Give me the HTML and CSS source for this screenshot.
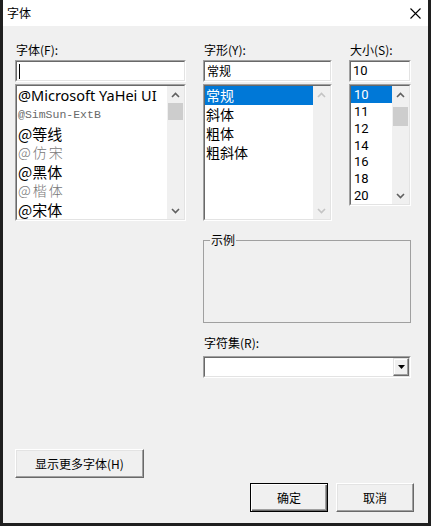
FILE: index.html
```html
<!DOCTYPE html>
<html lang="zh-CN">
<head>
<meta charset="utf-8">
<title>字体</title>
<link rel="stylesheet" href="styles.css">
</head>
<body>
<div class="window">
  <div class="titlebar">
    <span class="title">字体</span>
    <svg class="close" width="11" height="11" viewBox="0 0 11 11"><path d="M0.5 0.5L10.5 10.5M10.5 0.5L0.5 10.5" stroke="#000" stroke-width="1.1" fill="none"/></svg>
  </div>
  <div class="client">
    <div class="grid">
      <div class="col">
        <div class="label">字体(F):</div>
        <div class="edit"><div class="edit-in"><span class="caret"></span></div></div>
        <div class="list list-tall">
          <div class="list-in">
            <div class="items">
              <div class="item f-yahei">@Microsoft YaHei UI</div>
              <div class="item f-extb">@SimSun-ExtB</div>
              <div class="item f-dx">@等线</div>
              <div class="item f-light">@仿宋</div>
              <div class="item f-hei">@黑体</div>
              <div class="item f-light">@楷体</div>
              <div class="item f-song">@宋体</div>
            </div>
            <div class="scrollbar">
              <div class="arrow"><svg width="9" height="6" viewBox="0 0 9 6"><path d="M1 5L4.5 1.5L8 5" stroke="#606060" stroke-width="1.6" fill="none"/></svg></div>
              <div class="thumb thumb-font"></div>
              <div class="track"></div>
              <div class="arrow"><svg width="9" height="6" viewBox="0 0 9 6"><path d="M1 1L4.5 4.5L8 1" stroke="#606060" stroke-width="1.6" fill="none"/></svg></div>
            </div>
          </div>
        </div>
      </div>
      <div class="col">
        <div class="label">字形(Y):</div>
        <div class="edit"><div class="edit-in">常规</div></div>
        <div class="list list-tall">
          <div class="list-in">
            <div class="items items-style">
              <div class="item sel">常规</div>
              <div class="item">斜体</div>
              <div class="item">粗体</div>
              <div class="item">粗斜体</div>
            </div>
            <div class="scrollbar">
              <div class="arrow"><svg width="9" height="6" viewBox="0 0 9 6"><path d="M1 5L4.5 1.5L8 5" stroke="#c4c4c4" stroke-width="1.6" fill="none"/></svg></div>
              <div class="track"></div>
              <div class="arrow"><svg width="9" height="6" viewBox="0 0 9 6"><path d="M1 1L4.5 4.5L8 1" stroke="#c4c4c4" stroke-width="1.6" fill="none"/></svg></div>
            </div>
          </div>
        </div>
      </div>
      <div class="col">
        <div class="label">大小(S):</div>
        <div class="edit"><div class="edit-in edit-num">10</div></div>
        <div class="list list-short">
          <div class="list-in">
            <div class="items items-size">
              <div class="item sel">10</div>
              <div class="item">11</div>
              <div class="item">12</div>
              <div class="item">14</div>
              <div class="item">16</div>
              <div class="item">18</div>
              <div class="item">20</div>
            </div>
            <div class="scrollbar">
              <div class="arrow"><svg width="9" height="6" viewBox="0 0 9 6"><path d="M1 5L4.5 1.5L8 5" stroke="#606060" stroke-width="1.6" fill="none"/></svg></div>
              <div class="thumb thumb-size"></div>
              <div class="track"></div>
              <div class="arrow"><svg width="9" height="6" viewBox="0 0 9 6"><path d="M1 1L4.5 4.5L8 1" stroke="#606060" stroke-width="1.6" fill="none"/></svg></div>
            </div>
          </div>
        </div>
      </div>
      <div class="lower">
        <fieldset class="group">
          <legend>示例</legend>
        </fieldset>
        <div class="label label-charset">字符集(R):</div>
        <div class="combo">
          <div class="combo-in">
            <div class="combo-text"></div>
            <div class="drop">
              <svg width="7" height="4" viewBox="0 0 7 4"><path d="M0 0H7L3.5 4Z" fill="#000"/></svg>
            </div>
          </div>
        </div>
      </div>
    </div>
    <div class="btn btn-more">显示更多字体(H)</div>
    <div class="actions">
      <div class="btn btn-default">确定</div>
      <div class="btn">取消</div>
    </div>
  </div>
</div>
</body>
</html>
```

FILE: styles.css
```css
* { box-sizing: border-box; }
html, body { margin: 0; padding: 0; }
body {
  width: 431px;
  height: 526px;
  overflow: hidden;
  font-family: "Noto Sans CJK SC", "Noto Sans", sans-serif;
  font-size: 12px;
  color: #000;
  background: #1f1f1f;
}
.window {
  width: 431px;
  height: 526px;
  border-left: 3px solid #1f1f1f;
  border-right: 3px solid #1f1f1f;
  border-bottom: 3px solid #1f1f1f;
  background: #f0f0f0;
  display: flex;
  flex-direction: column;
}
.titlebar {
  height: 26px;
  background: #fff;
  display: flex;
  align-items: center;
  justify-content: space-between;
  padding: 0 7px 0 4px;
}
.title { font-size: 12px; line-height: 16px; }
.close { display: block; margin-top: 1px; }

.client {
  flex: 1;
  padding: 16px 14px 11px 12px;
  display: flex;
  flex-direction: column;
}
.grid {
  display: grid;
  grid-template-columns: 171px 129px 62px;
  column-gap: 17px;
  align-items: start;
}
.col { display: flex; flex-direction: column; }
.label { height: 16px; line-height: 16px; font-size: 12px; margin-left: 1px; }

.edit {
  margin-top: 2px;
  height: 22px;
  border: 1px solid;
  border-color: #a0a0a0 #fff #fff #a0a0a0;
}
.edit-in {
  height: 100%;
  border: 1px solid;
  border-color: #696969 #e3e3e3 #e3e3e3 #696969;
  background: #fff;
  padding-left: 2px;
  font-size: 12px;
  line-height: 18px;
  display: flex;
  align-items: center;
}
.edit-num { font-family: Roboto, "Noto Sans", sans-serif; font-size: 13px; }
.caret { display: block; width: 1px; height: 15px; background: #000; margin-left: 0; }

.list {
  margin-top: 2px;
  border: 1px solid;
  border-color: #a0a0a0 #fff #fff #a0a0a0;
}
.list-tall { height: 137px; }
.list-short { height: 122px; }
.list-in {
  height: 100%;
  border: 1px solid;
  border-color: #696969 #e3e3e3 #e3e3e3 #696969;
  background: #fff;
  display: flex;
  overflow: hidden;
}
.items { flex: 1; display: flex; flex-direction: column; min-width: 0; }
.item {
  height: 19px;
  line-height: 19px;
  padding-left: 1px;
  white-space: nowrap;
  overflow: hidden;
  font-size: 15px;
}
.f-yahei { font-family: "Noto Sans", "Noto Sans CJK SC", sans-serif; font-size: 14.5px; }
.f-extb { font-family: "Liberation Mono", monospace; font-size: 11.5px; color: #6a6a6a; }
.f-dx { font-size: 15px; }
.f-light { font-size: 14px; color: #777; font-weight: 300; letter-spacing: 2px; }
.f-hei { font-size: 15px; font-weight: 400; }
.f-song { font-size: 15px; }

.items-style .item { font-size: 14px; }
.items-size .item {
  height: 17px;
  line-height: 17px;
  font-family: Roboto, "Noto Sans", sans-serif;
  font-size: 13px;
  padding-left: 3px;
}
.sel { background: #0078d7; color: #fff; }

.scrollbar {
  width: 17px;
  flex: none;
  background: #f0f0f0;
  display: flex;
  flex-direction: column;
}
.arrow { height: 17px; display: flex; align-items: center; justify-content: center; }
.arrow svg { display: block; }
.thumb { margin: 0 1px; background: #cdcdcd; flex: none; }
.thumb-font { height: 17px; }
.thumb-size { height: 19px; margin-top: 4px; }
.track { flex: 1; }

.lower {
  grid-column: 2 / 4;
  display: flex;
  flex-direction: column;
}
.group {
  margin: 11px 0 0 0;
  padding: 0;
  height: 91px;
  border: 1px solid #a0a0a0;
  min-width: 0;
}
.group legend {
  margin-left: 6px;
  padding: 0 1px;
  font-size: 12px;
  line-height: 16px;
}
.label-charset { margin-top: 12px; }
.combo {
  margin-top: 5px;
  height: 22px;
  border: 1px solid;
  border-color: #a0a0a0 #fff #fff #a0a0a0;
}
.combo-in {
  height: 100%;
  border: 1px solid;
  border-color: #696969 #e3e3e3 #e3e3e3 #696969;
  background: #fff;
  display: flex;
}
.combo-text { flex: 1; }
.drop {
  width: 16px;
  background: #f0f0f0;
  border: 1px solid;
  border-color: #e3e3e3 #696969 #696969 #e3e3e3;
  box-shadow: inset -1px -1px 0 #a0a0a0, inset 1px 1px 0 #fff;
  display: flex;
  align-items: center;
  justify-content: center;
}
.drop svg { display: block; }

.btn {
  height: 29px;
  background: #f0f0f0;
  border: 1px solid;
  border-color: #fff #696969 #696969 #fff;
  box-shadow: inset -1px -1px 0 #a0a0a0, inset 1px 1px 0 #e3e3e3;
  display: flex;
  align-items: center;
  justify-content: center;
  font-size: 12px;
  line-height: 16px;
}
.btn-more {
  width: 129px;
  margin-top: 71px;
}
.actions {
  margin-top: 5px;
  display: flex;
  justify-content: flex-end;
  gap: 8px;
}
.actions .btn { width: 78px; }
.btn-default {
  border: 1px solid #000;
  box-shadow: inset 1px 1px 0 #fff, inset -1px -1px 0 #696969, inset -2px -2px 0 #a0a0a0;
}
```
